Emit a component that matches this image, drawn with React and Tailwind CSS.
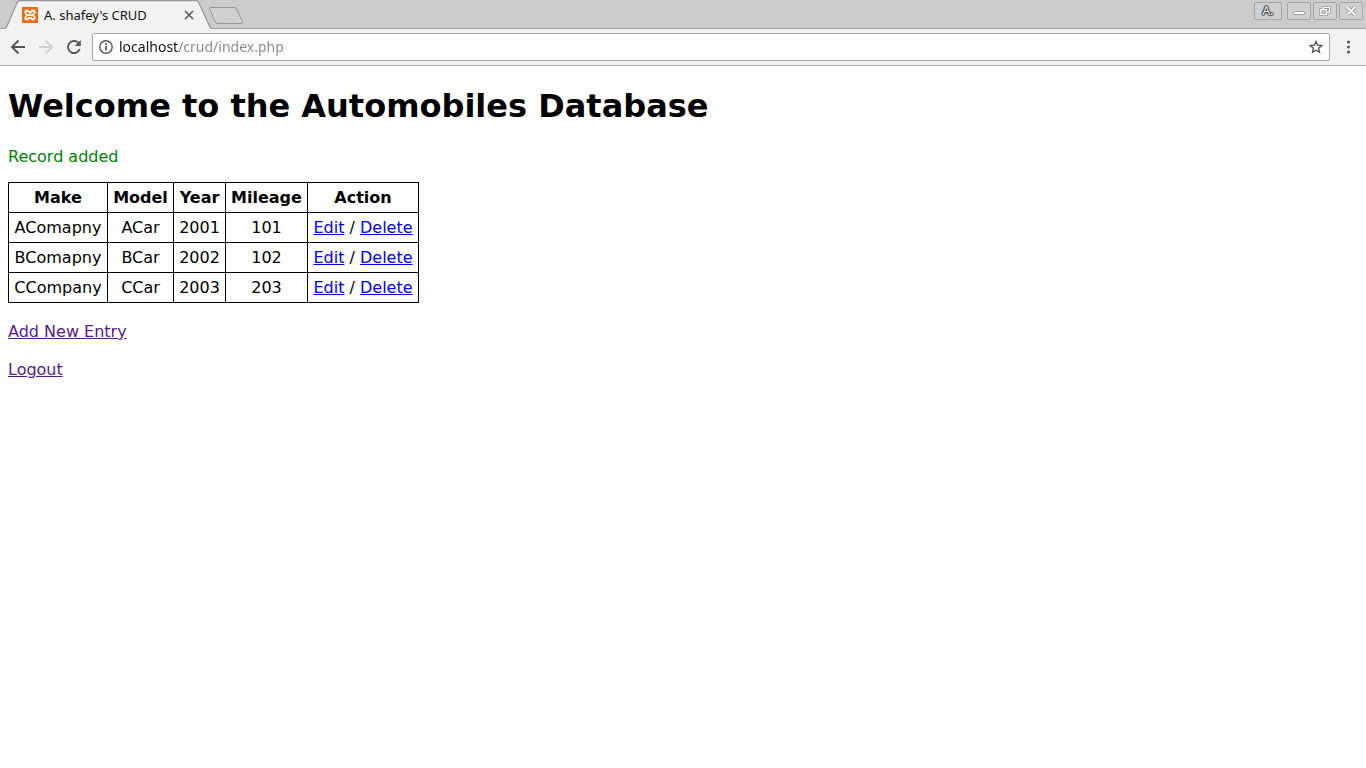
import React from "react";

const cars = [
  { make: "AComapny", model: "ACar", year: 2001, mileage: 101 },
  { make: "BComapny", model: "BCar", year: 2002, mileage: 102 },
  { make: "CCompany", model: "CCar", year: 2003, mileage: 203 },
];

const columns = [
  { name: "Make", width: "w-[99px]" },
  { name: "Model", width: "w-[66px]" },
  { name: "Year", width: "w-[52px]" },
  { name: "Mileage", width: "w-[82px]" },
  { name: "Action", width: "w-[111px]" },
];

function Favicon() {
  return (
    <svg width="16" height="16" viewBox="0 0 16 16" className="shrink-0" aria-hidden="true">
      <rect width="16" height="16" rx="1" fill="#ee6f1a" />
      <rect x="0.5" y="0.5" width="15" height="15" rx="1" fill="none" stroke="#d9691c" />
      <g fill="none" strokeLinecap="round">
        <path d="M4.900 5.200L11.100 10.800M11.100 5.200L4.900 10.800" stroke="#fff" strokeWidth="5" />
        <path d="M5 5.400L11 10.600M11 5.400L5 10.600" stroke="#ee6f1a" strokeWidth="1.500" />
      </g>
      <path d="M6.500 8H9.500" stroke="#fff" strokeWidth="2" />
    </svg>
  );
}

function WindowButton({ label, children }) {
  return (
    <button
      type="button"
      aria-label={label}
      className="flex h-[18px] w-6 items-center justify-center rounded-xs border border-[#a6a6a6] bg-[#d0d0d0]"
    >
      {children}
    </button>
  );
}

function TabStrip() {
  return (
    <div className="flex h-7 items-start bg-[#cccccc]">
      <div className="relative ml-1 h-[29px] w-[208px] shrink-0">
        <svg
          className="absolute inset-0"
          width="208"
          height="29"
          viewBox="0 0 208 29"
          aria-hidden="true"
        >
          <path d="M0 29C2 29 2 28 3 26L13 3Q14 0.500 16 0.500H192Q194 0.500 195 3L205.500 26Q206.500 28.500 208 28.500V29Z" fill="#f2f2f2" />
          <path d="M0 28.500C2 28.500 2 27.500 3 26L13 3Q14 0.500 16 0.500H192Q194 0.500 195 3L205.500 26Q206.500 28.500 208 28.500" fill="none" stroke="#999" strokeWidth="1.300" />
        </svg>
        <div className="relative flex h-full items-center pl-[18px]">
          <Favicon />
          <span className="ml-1.5 w-[139px] font-['Noto_Sans',sans-serif] text-[13px] leading-5 text-[#111]">
            A. shafey's CRUD
          </span>
          <button type="button" aria-label="Close tab" className="flex size-3 items-center justify-center">
            <svg width="12" height="12" viewBox="0 0 12 12" aria-hidden="true">
              <path d="M2 2L10 10M10 2L2 10" stroke="#5a5a5a" strokeWidth="1.700" />
            </svg>
          </button>
        </div>
      </div>
      <button type="button" aria-label="New tab" className="mt-1.5 -ml-1">
        <svg width="36" height="19" viewBox="0 0 36 19" aria-hidden="true">
          <path
            d="M3 1.500H26Q28 1.500 28.700 3L34.500 16Q35 17.500 33 17.500H9.500Q8 17.500 7.300 16L1.500 3Q1 1.500 3 1.500Z"
            fill="#d0d0d0"
            stroke="#999"
          />
        </svg>
      </button>
      <div className="ml-auto flex items-center pt-0.5 pr-[3px]">
        <button
          type="button"
          aria-label="Profile A."
          className="mr-[5px] flex h-[18px] w-7 items-center justify-center rounded-xs border border-[#a6a6a6] bg-[#d0d0d0] font-['Noto_Sans',sans-serif] text-xs leading-4 text-white [text-shadow:1px_0_1px_#333,-1px_0_1px_#333,0_1px_1px_#333,0_-1px_1px_#333,0_0_2px_#333]"
        >
          A.
        </button>
        <div className="flex gap-0.5">
          <WindowButton label="Minimize">
            <svg width="14" height="14" viewBox="0 0 14 14" aria-hidden="true">
              <rect x="1.500" y="7.500" width="11" height="3" rx="1" fill="#fff" stroke="#999" />
            </svg>
          </WindowButton>
          <WindowButton label="Restore">
            <svg width="14" height="14" viewBox="0 0 14 14" fill="none" aria-hidden="true">
              <path d="M5.500 3.500H11.500V8.500H5.500ZM2.500 5.500H8.500V10.500H2.500Z" stroke="#999" strokeWidth="2.600" />
              <path d="M5.500 3.500H11.500V8.500H5.500Z" stroke="#fff" strokeWidth="1.200" />
              <path d="M2.500 5.500H8.500V10.500H2.500Z" fill="#bbb" stroke="#fff" strokeWidth="1.200" />
            </svg>
          </WindowButton>
          <WindowButton label="Close">
            <svg width="14" height="14" viewBox="0 0 14 14" aria-hidden="true">
              <path d="M3 3L11 11M11 3L3 11" stroke="#999" strokeWidth="3.600" />
              <path d="M3 3L11 11M11 3L3 11" stroke="#fff" strokeWidth="1.900" />
            </svg>
          </WindowButton>
        </div>
      </div>
    </div>
  );
}

function Toolbar() {
  return (
    <div className="flex h-[38px] items-center border-t border-b border-t-[#a3a3a3] border-b-[#b0b0b0] bg-[#f2f2f2] pl-2.5">
      <div className="flex gap-3">
        <button type="button" aria-label="Back">
          <svg width="16" height="16" viewBox="0 0 16 16" fill="none" stroke="#555" strokeWidth="1.900" aria-hidden="true">
            <path d="M15 8H2.500M8.500 1.500L2 8L8.500 14.500" />
          </svg>
        </button>
        <button type="button" aria-label="Forward" disabled>
          <svg width="16" height="16" viewBox="0 0 16 16" fill="none" stroke="#d2d2d2" strokeWidth="1.900" aria-hidden="true">
            <path d="M1 8H13.500M7.500 1.500L14 8L7.500 14.500" />
          </svg>
        </button>
        <button type="button" aria-label="Reload">
          <svg width="16" height="16" viewBox="0 0 16 16" aria-hidden="true">
            <path d="M13.700 10A6 6 0 1 1 12.300 3.800" fill="none" stroke="#555" strokeWidth="1.900" />
            <path d="M14.800 1V7H8.800Z" fill="#555" />
          </svg>
        </button>
      </div>
      <div className="ml-2.5 flex h-7 flex-1 items-center rounded-xs border border-[#a6a6a6] bg-white px-1.5">
        <svg width="14" height="14" viewBox="0 0 14 14" aria-hidden="true">
          <circle cx="7" cy="7" r="6.200" fill="none" stroke="#555" strokeWidth="1.400" />
          <path d="M7 6V10.500M7 3.300V4.900" stroke="#555" strokeWidth="1.800" />
        </svg>
        <input
          type="text"
          aria-label="Address"
          defaultValue="localhost/crud/index.php"
          className="ml-1.5 min-w-0 flex-1 bg-[linear-gradient(to_right,#111111_60px,#888888_60px)] bg-clip-text font-['Noto_Sans',sans-serif] text-sm leading-5 text-transparent caret-black outline-none"
        />
        <button type="button" aria-label="Bookmark this page">
          <svg width="14" height="14" viewBox="0 0 14 14" aria-hidden="true">
            <path
              d="M7 1.500L8.600 5.200L12.700 5.600L9.600 8.300L10.500 12.300L7 10.200L3.500 12.300L4.400 8.300L1.300 5.600L5.400 5.200Z"
              fill="none"
              stroke="#555"
              strokeWidth="1.400"
            />
          </svg>
        </button>
      </div>
      <button type="button" aria-label="Menu" className="flex w-9 justify-center">
        <svg width="4" height="14" viewBox="0 0 4 14" fill="#555" aria-hidden="true">
          <circle cx="2.500" cy="2" r="1.500" />
          <circle cx="2.500" cy="7" r="1.500" />
          <circle cx="2.500" cy="12" r="1.500" />
        </svg>
      </button>
    </div>
  );
}

export default function App() {
  return (
    <div className="min-h-screen bg-white">
      <header>
        <TabStrip />
        <Toolbar />
      </header>
      <main className="px-2 pt-5 font-['DejaVu_Sans',sans-serif] text-base leading-[19px] text-black">
        <h1 className="text-[32px] leading-10 font-bold">Welcome to the Automobiles Database</h1>
        <p className="mt-[21px] text-[#008000]">Record added</p>
        <table className="mt-4 border-collapse border border-black text-center">
          <thead>
            <tr>
              {columns.map(({ name, width }) => (
                <th key={name} className={`border border-black p-[5px] font-bold ${width}`}>
                  {name}
                </th>
              ))}
            </tr>
          </thead>
          <tbody>
            {cars.map((car) => (
              <tr key={car.make}>
                <td className="border border-black p-[5px]">{car.make}</td>
                <td className="border border-black p-[5px]">{car.model}</td>
                <td className="border border-black p-[5px]">{car.year}</td>
                <td className="border border-black p-[5px]">{car.mileage}</td>
                <td className="border border-black p-[5px]">
                  <a href="#edit" className="text-[#0000ee] underline">Edit</a>
                  {" / "}
                  <a href="#delete" className="text-[#0000ee] underline">Delete</a>
                </td>
              </tr>
            ))}
          </tbody>
        </table>
        <p className="mt-[19px]">
          <a href="#add" className="text-[#551a8b] underline">Add New Entry</a>
        </p>
        <p className="mt-[19px]">
          <a href="#logout" className="text-[#551a8b] underline">Logout</a>
        </p>
      </main>
    </div>
  );
}
